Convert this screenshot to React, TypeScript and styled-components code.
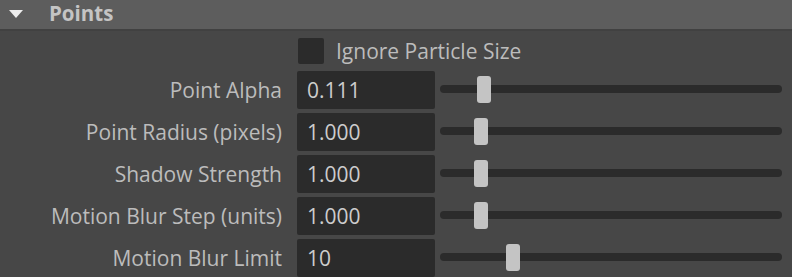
import React from 'react'
import styled, { createGlobalStyle } from 'styled-components'

const GlobalStyle = createGlobalStyle`
  html, body {
    margin: 0;
    padding: 0;
    background: #474747;
    overflow: hidden;
  }
  body {
    font-family: "Open Sans", "Noto Sans", sans-serif;
  }
`

type Field = {
  label: string
  value: string
  thumb: number
}

const fields: Field[] = [
  { label: 'Point Alpha', value: '0.111', thumb: 37 },
  { label: 'Point Radius (pixels)', value: '1.000', thumb: 34 },
  { label: 'Shadow Strength', value: '1.000', thumb: 34 },
  { label: 'Motion Blur Step (units)', value: '1.000', thumb: 34 },
  { label: 'Motion Blur Limit', value: '10', thumb: 66 },
]

const Panel = styled.div`
  width: 792px;
  height: 277px;
  background: #474747;
  overflow: hidden;
`

const Header = styled.div`
  height: 29px;
  display: flex;
  align-items: center;
  background: #5d5d5d;
  border-bottom: 2px solid #414141;
`

const Arrow = styled.div`
  width: 0;
  height: 0;
  margin-left: 9px;
  margin-right: 26px;
  margin-top: -2px;
  border-left: 7.5px solid transparent;
  border-right: 7.5px solid transparent;
  border-top: 8px solid #eeeeee;
`

const Title = styled.span`
  font-size: 20.5px;
  font-weight: 700;
  color: #c4c4c4;
  margin-top: -3px;
`

const Body = styled.div`
  padding-top: 7px;
  display: flex;
  flex-direction: column;
`

const CheckRow = styled.label`
  display: flex;
  align-items: center;
  gap: 12px;
  height: 26px;
  margin-left: 298px;
  margin-bottom: 7px;
  font-size: 21px;
  color: #bcbcbc;
`

const CheckBox = styled.span`
  width: 26px;
  height: 26px;
  border-radius: 2px;
  background: #2b2b2b;
`

const Rows = styled.div`
  display: flex;
  flex-direction: column;
  gap: 4px;
`

const Row = styled.div`
  display: grid;
  grid-template-columns: 282px 138px 1fr;
  column-gap: 15px;
  align-items: center;
  height: 38px;
  padding-right: 10px;
`

const Label = styled.span`
  text-align: right;
  font-size: 21px;
  color: #bcbcbc;
  white-space: nowrap;
`

const Input = styled.div`
  height: 38px;
  box-sizing: border-box;
  background: #2b2b2b;
  border-radius: 2px;
  padding-left: 10px;
  display: flex;
  align-items: center;
  font-size: 21px;
  color: #cdcdcd;
`

const Slider = styled.div`
  position: relative;
  margin-left: -10px;
  height: 8px;
  margin-top: -2px;
  border-radius: 4px;
  background: #2b2b2b;
`

const Thumb = styled.div`
  position: absolute;
  top: -9px;
  width: 14px;
  height: 27px;
  border-radius: 3px;
  background: #c4c4c4;
`

export default function App() {
  return (
    <Panel>
      <GlobalStyle />
      <Header>
        <Arrow />
        <Title>Points</Title>
      </Header>
      <Body>
        <CheckRow>
          <CheckBox />
          Ignore Particle Size
        </CheckRow>
        <Rows>
          {fields.map((f) => (
            <Row key={f.label}>
              <Label>{f.label}</Label>
              <Input>{f.value}</Input>
              <Slider>
                <Thumb style={{ left: f.thumb }} />
              </Slider>
            </Row>
          ))}
        </Rows>
      </Body>
    </Panel>
  )
}
